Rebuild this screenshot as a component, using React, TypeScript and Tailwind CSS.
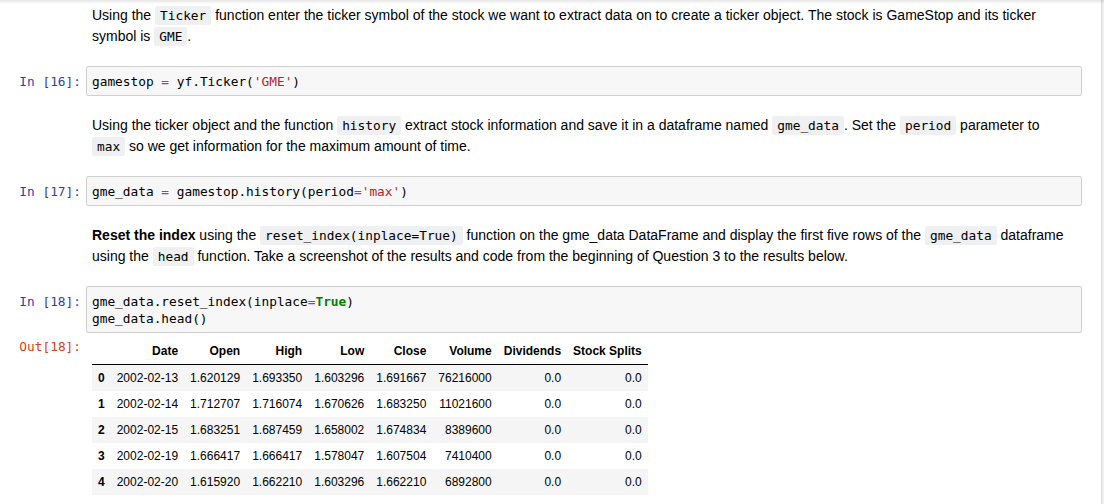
import type { ReactNode } from "react";

const mono = "font-['DejaVu_Sans_Mono',monospace]";
const sans = "font-['Liberation_Sans',Arial,sans-serif]";

function Op({ children }: { children: ReactNode }) {
  return <span className="text-[#aa22ff]">{children}</span>;
}

function Str({ children }: { children: ReactNode }) {
  return <span className="text-[#ba2121]">{children}</span>;
}

function Kw({ children }: { children: ReactNode }) {
  return <span className="font-bold text-[#008000]">{children}</span>;
}

function Code({ children }: { children: ReactNode }) {
  return (
    <code className={`${mono} rounded-[2px] bg-[#eff0f1] px-[5px] py-[2px] text-[12.8px] text-black`}>
      {children}
    </code>
  );
}

function TextCell({ first, children }: { first?: boolean; children: ReactNode }) {
  return (
    <div className={`flex ${first ? "pt-[5px]" : "pt-[19px]"} pb-[19px]`}>
      <div className="w-[86px] shrink-0" />
      <div className={`${sans} pl-[6px] text-[14px] leading-[21px] text-black`}>{children}</div>
    </div>
  );
}

function CodeCell({ n, children }: { n: number; children: ReactNode }) {
  return (
    <div className="flex">
      <div
        className={`${mono} w-[86px] shrink-0 pr-[5px] pt-[7px] text-right text-[12.8px] leading-[17px] text-[#303f9f]`}
      >
        In&nbsp;[{n}]:
      </div>
      <div className="w-[996px] rounded-[2px] border border-[#cfcfcf] bg-[#f7f7f7] pt-[6px] pb-[5px] pl-[5px]">
        <pre className={`${mono} text-[12.8px] leading-[17px] text-black`}>{children}</pre>
      </div>
    </div>
  );
}

const columns = ["Date", "Open", "High", "Low", "Close", "Volume", "Dividends", "Stock Splits"];

const rows = [
  ["2002-02-13", "1.620129", "1.693350", "1.603296", "1.691667", "76216000", "0.0", "0.0"],
  ["2002-02-14", "1.712707", "1.716074", "1.670626", "1.683250", "11021600", "0.0", "0.0"],
  ["2002-02-15", "1.683251", "1.687459", "1.658002", "1.674834", "8389600", "0.0", "0.0"],
  ["2002-02-19", "1.666417", "1.666417", "1.578047", "1.607504", "7410400", "0.0", "0.0"],
  ["2002-02-20", "1.615920", "1.662210", "1.603296", "1.662210", "6892800", "0.0", "0.0"],
];

function OutputCell() {
  return (
    <div className="flex">
      <div
        className={`${mono} w-[86px] shrink-0 pr-[5px] pt-[5px] text-right text-[12.8px] leading-[17px] text-[#d84315]`}
      >
        Out[18]:
      </div>
      <div className="pl-[6px] pt-[5px]">
        <table className={`${sans} border-collapse text-[12px] leading-[14px] text-black`}>
          <thead>
            <tr className="border-b border-black">
              <th className="px-[6px] py-[6px]" />
              {columns.map((c) => (
                <th key={c} className="px-[6px] py-[6px] text-right font-bold whitespace-nowrap">
                  {c}
                </th>
              ))}
            </tr>
          </thead>
          <tbody>
            {rows.map((r, i) => (
              <tr key={i} className={i % 2 === 0 ? "bg-[#f5f5f5]" : ""}>
                <th className="px-[6px] py-[6px] text-right font-bold">{i}</th>
                {r.map((v, j) => (
                  <td key={j} className="px-[6px] py-[6px] text-right whitespace-nowrap">
                    {v}
                  </td>
                ))}
              </tr>
            ))}
          </tbody>
        </table>
      </div>
    </div>
  );
}

export default function App() {
  return (
    <div className="relative flex h-[504px] w-[1104px] overflow-hidden bg-[#f0f0f0]">
      <div className="h-full w-[1102px] border-r border-[#dcdcdc] bg-white">
        <TextCell first>
          Using the <Code>Ticker</Code> function enter the ticker symbol of the stock we want to extract data on
          to create a ticker object. The stock is GameStop and its ticker
          <br />
          symbol is <Code>GME</Code>.
        </TextCell>
        <CodeCell n={16}>
          gamestop <Op>=</Op> yf.Ticker(<Str>'GME'</Str>)
        </CodeCell>

        <TextCell>
          Using the ticker object and the function <Code>history</Code> extract stock information and save it in a
          dataframe named <Code>gme_data</Code>. Set the <Code>period</Code> parameter to
          <br />
          <Code>max</Code> so we get information for the maximum amount of time.
        </TextCell>
        <CodeCell n={17}>
          gme_data <Op>=</Op> gamestop.history(period<Op>=</Op>
          <Str>'max'</Str>)
        </CodeCell>

        <TextCell>
          <strong>Reset the index</strong> using the <Code>reset_index(inplace=True)</Code> function on the
          gme_data DataFrame and display the first five rows of the <Code>gme_data</Code> dataframe
          <br />
          using the <Code>head</Code> function. Take a screenshot of the results and code from the beginning of
          Question 3 to the results below.
        </TextCell>
        <CodeCell n={18}>
          gme_data.reset_index(inplace<Op>=</Op>
          <Kw>True</Kw>){"\n"}gme_data.head()
        </CodeCell>

        <OutputCell />
      </div>
      {/* header shadow falling over the notebook */}
      <div className="pointer-events-none absolute inset-x-0 top-0 h-[4px] bg-linear-to-b from-black/10 to-transparent" />
    </div>
  );
}
